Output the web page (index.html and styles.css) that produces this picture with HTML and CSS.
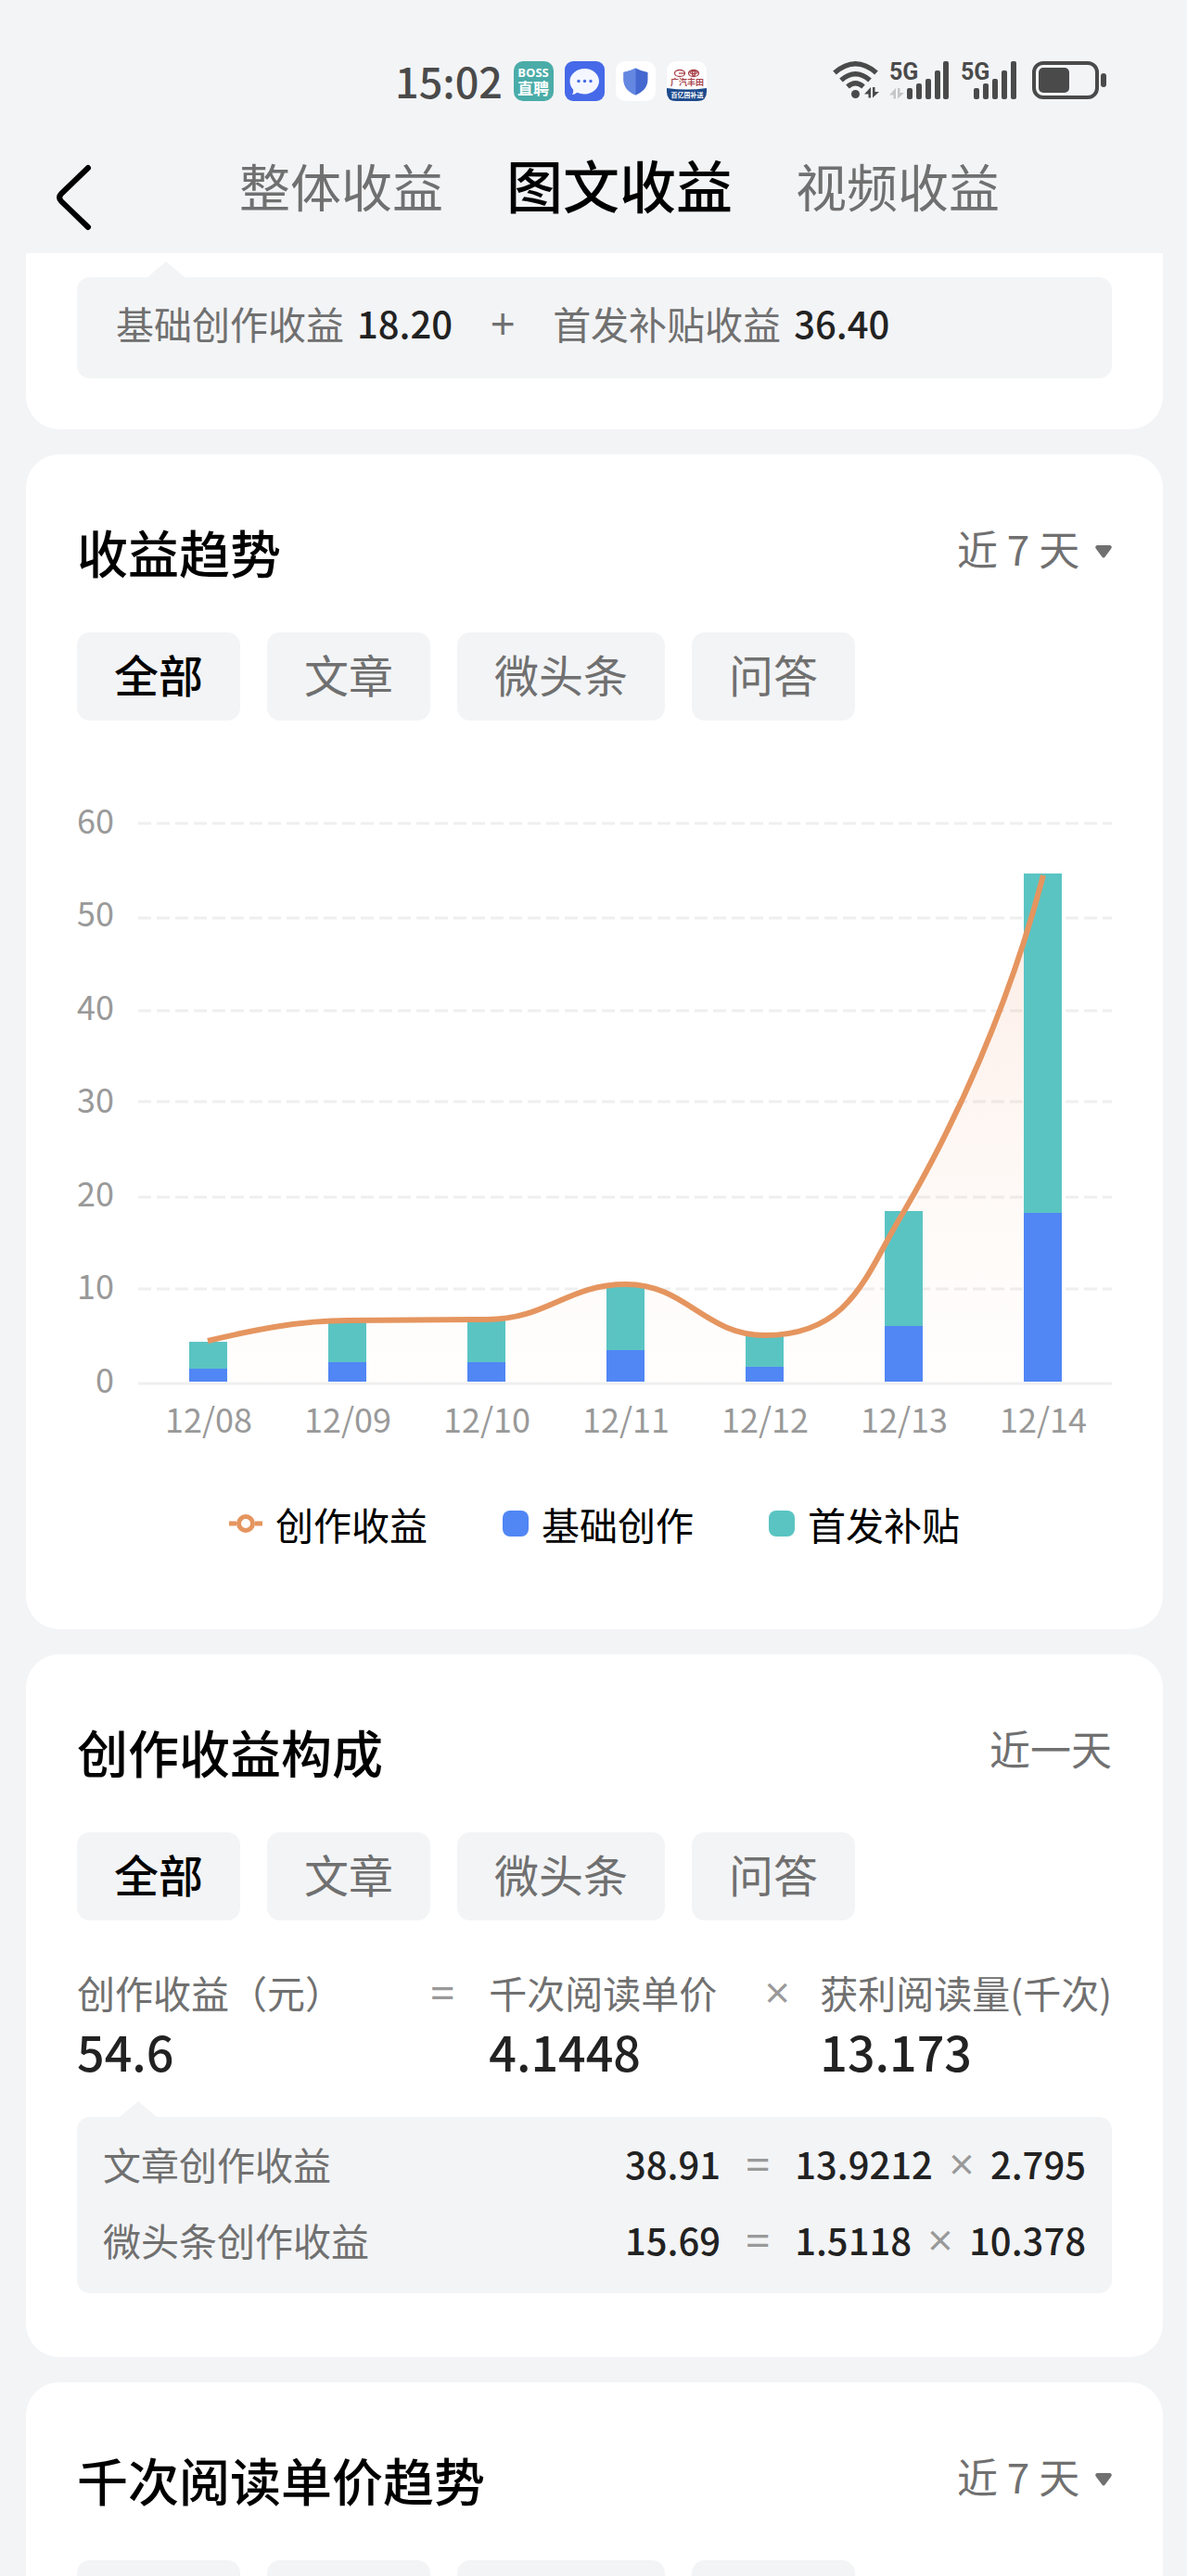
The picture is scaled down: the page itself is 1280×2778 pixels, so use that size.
FILE: index.html
```html
<!DOCTYPE html>
<html lang="zh-CN">
<head>
    <meta charset="UTF-8">
    <meta name="viewport" content="width=device-width, initial-scale=1.0">
    <title>图文收益</title>
    <link rel="stylesheet" href="styles.css">
</head>
<body>
    <div class="status-bar">
        <div class="status-left">
            <span class="time">15:02</span>
            <svg class="app-icon" viewBox="0 0 43 43">
                <rect width="43" height="43" rx="10" fill="#4aaca8"/>
                <text x="21" y="17" class="boss-en">BOSS</text>
                <text x="21" y="36" class="boss-cn">直聘</text>
            </svg>
            <svg class="app-icon" viewBox="0 0 43 43">
                <rect width="43" height="43" rx="9" fill="#4569e8"/>
                <path d="M21.500 8C30 8 37 14 37 21.500S30 35.500 21.500 35.500C18.500 35.500 16 35 13.500 33.800C12 35 10 36 8 36C9.200 34.600 9.400 32.500 9 30.600C6.800 28 5.500 25 5.500 21.500C5.500 14 13 8 21.500 8Z" fill="#f4f7ff"/>
                <g fill="#4569e8"><circle cx="15" cy="21.500" r="1.700"/><circle cx="21.500" cy="21.500" r="1.700"/><circle cx="28" cy="21.500" r="1.700"/></g>
            </svg>
            <svg class="app-icon" viewBox="0 0 43 43">
                <rect width="43" height="43" rx="10" fill="#fff"/>
                <path d="M21.500 7.500Q28 11 34.500 12V20C34.500 28 29 33.500 21.500 36.500C14 33.500 8.500 28 8.500 20V12Q15 11 21.500 7.500Z" fill="#4468cf"/>
                <path d="M21.500 7.500V36.500C14 33.500 8.500 28 8.500 20V12Q15 11 21.500 7.500Z" fill="#6488e2"/>
            </svg>
            <svg class="app-icon" viewBox="0 0 43 43">
                <rect width="43" height="43" rx="10" fill="#fff"/>
                <path d="M0 29Q21.500 32 43 29V33Q43 43 33 43H10Q0 43 0 33Z" fill="#1d4a8c"/>
                <g fill="none" stroke="#a8434a" stroke-width="1.300">
                    <ellipse cx="14" cy="13" rx="5.500" ry="3.500"/>
                    <path d="M13 13H20"/>
                    <ellipse cx="29" cy="13" rx="5.500" ry="3.500"/>
                    <ellipse cx="29" cy="12" rx="4" ry="1.500"/>
                    <ellipse cx="29" cy="13" rx="1.500" ry="3"/>
                </g>
                <text x="22" y="26" class="car-name">广汽丰田</text>
                <text x="22" y="39" class="car-sub">百亿国补送</text>
            </svg>
        </div>
        <div class="status-right">
            <svg class="wifi" viewBox="0 0 50 42">
                <g fill="none" stroke="#4a4a4a" stroke-width="5.500">
                    <path d="M2 12.500Q24.500 -7 47 12.500"/>
                    <path d="M9 20.500Q24.500 7 40 20.500"/>
                    <path d="M16 27.500Q24.500 20 33 27.500"/>
                </g>
                <circle cx="24.500" cy="35.500" r="4.500" fill="#4a4a4a"/>
                <path d="M41 28V39.500H38.500V35.500H34L41 28Z M43 28V39.500L50 33H45.500V28Z" fill="#4a4a4a"/>
            </svg>
            <svg class="signal" viewBox="0 0 66 42">
                <text x="0" y="20" class="net">5G</text>
                <path d="M7 29V40.500H4.500V36.500H0Z M9 29V40.500L16 34H11.500V29Z" fill="#c4c5c7"/>
                <g fill="#4a4a4a">
                    <rect x="19" y="29" width="6" height="12" rx="2"/>
                    <rect x="29" y="24" width="6" height="17" rx="2"/>
                    <rect x="39" y="19" width="6" height="22" rx="2"/>
                    <rect x="49" y="10" width="6" height="31" rx="2"/>
                    <rect x="58" y="0" width="6" height="41" rx="2"/>
                </g>
            </svg>
            <svg class="signal" viewBox="0 0 66 42">
                <text x="0" y="20" class="net">5G</text>
                <g fill="#4a4a4a">
                    <rect x="14" y="29" width="6" height="12" rx="2"/>
                    <rect x="24" y="24" width="6" height="17" rx="2"/>
                    <rect x="34" y="19" width="6" height="22" rx="2"/>
                    <rect x="44" y="10" width="6" height="31" rx="2"/>
                    <rect x="54" y="0" width="6" height="41" rx="2"/>
                </g>
            </svg>
            <svg class="battery" viewBox="0 0 80 42">
                <rect x="2" y="2" width="68" height="37" rx="10" fill="none" stroke="#4a4a4a" stroke-width="4"/>
                <rect x="7" y="7" width="33" height="27" rx="5" fill="#4a4a4a"/>
                <rect x="74" y="13" width="6" height="15" rx="3" fill="#4a4a4a"/>
            </svg>
        </div>
    </div>

    <header class="nav-bar">
        <button class="back" aria-label="返回">
            <svg viewBox="0 0 38 70"><path d="M35 3L6 31Q2 35 6 39L35 67" fill="none" stroke="#000" stroke-width="6" stroke-linecap="round"/></svg>
        </button>
        <nav class="tabs">
            <a href="#">整体收益</a>
            <a href="#" class="active">图文收益</a>
            <a href="#">视频收益</a>
        </nav>
    </header>

    <main class="content">
        <section class="card card-cut">
            <div class="tip tip-sum">
                <span>基础创作收益</span><b>18.20</b>
                <i class="op plus">+</i>
                <span>首发补贴收益</span><b>36.40</b>
            </div>
        </section>

        <section class="card">
            <div class="card-head">
                <h2>收益趋势</h2>
                <label class="range">
                    <select aria-label="时间范围"><option>近 7 天</option></select>
                    <svg class="caret" viewBox="0 0 18 14"><path d="M2 0H16Q19 1 17 4L11 12Q9 15 7 12L1 4Q-1 1 2 0Z" fill="#707070"/></svg>
                </label>
            </div>
            <div class="chips">
                <button class="chip active">全部</button>
                <button class="chip">文章</button>
                <button class="chip">微头条</button>
                <button class="chip">问答</button>
            </div>
            <svg class="chart" viewBox="0 0 1116 704">
                <defs>
                    <linearGradient id="area" x1="0" y1="0" x2="0" y2="1">
                        <stop offset="0" stop-color="#ea6a3a" stop-opacity="0.140"/>
                        <stop offset="1" stop-color="#f5c89a" stop-opacity="0.020"/>
                    </linearGradient>
                </defs>
                <g class="grid">
                    <path d="M66 34H1116"/>
                    <path d="M66 136H1116"/>
                    <path d="M66 236H1116"/>
                    <path d="M66 334H1116"/>
                    <path d="M66 437H1116"/>
                    <path d="M66 536H1116"/>
                </g>
                <path class="axis" d="M66 638H1116"/>
                <g class="y-labels">
                    <text x="40" y="45">60</text>
                    <text x="40" y="145">50</text>
                    <text x="40" y="246">40</text>
                    <text x="40" y="346">30</text>
                    <text x="40" y="447">20</text>
                    <text x="40" y="547">10</text>
                    <text x="40" y="648">0</text>
                </g>
                <path fill="url(#area)" d="M141 592C191 580 241 570 292 570L442 569C507 569 529 531 592 531C657 531 677 586 742 586C837 586 852 516 892 452C947 358 1005 231 1042 90V636H141Z"/>
                <g class="bar-extra">
                    <rect x="121" y="593" width="41" height="29"/>
                    <rect x="271" y="570" width="41" height="45"/>
                    <rect x="421" y="569" width="41" height="46"/>
                    <rect x="571" y="532" width="41" height="70"/>
                    <rect x="721" y="586" width="41" height="34"/>
                    <rect x="871" y="452" width="41" height="124"/>
                    <rect x="1021" y="88" width="41" height="366"/>
                </g>
                <g class="bar-base">
                    <rect x="121" y="622" width="41" height="14"/>
                    <rect x="271" y="615" width="41" height="21"/>
                    <rect x="421" y="615" width="41" height="21"/>
                    <rect x="571" y="602" width="41" height="34"/>
                    <rect x="721" y="620" width="41" height="16"/>
                    <rect x="871" y="576" width="41" height="60"/>
                    <rect x="1021" y="454" width="41" height="182"/>
                </g>
                <path class="line" d="M141 592C191 580 241 570 292 570L442 569C507 569 529 531 592 531C657 531 677 586 742 586C837 586 852 516 892 452C947 358 1005 231 1042 90"/>
                <g class="x-labels">
                    <text x="142" y="691">12/08</text>
                    <text x="292" y="691">12/09</text>
                    <text x="442" y="691">12/10</text>
                    <text x="592" y="691">12/11</text>
                    <text x="742" y="691">12/12</text>
                    <text x="892" y="691">12/13</text>
                    <text x="1042" y="691">12/14</text>
                </g>
            </svg>
            <ul class="legend">
                <li><svg class="line-mark" viewBox="0 0 36 20"><path d="M0 10H8M28 10H36" stroke="#e5955f" stroke-width="5"/><circle cx="18" cy="10" r="7.500" fill="none" stroke="#e5955f" stroke-width="5"/></svg>创作收益</li>
                <li><span class="dot dot-base"></span>基础创作</li>
                <li><span class="dot dot-extra"></span>首发补贴</li>
            </ul>
        </section>

        <section class="card">
            <div class="card-head">
                <h2>创作收益构成</h2>
                <span class="range">近一天</span>
            </div>
            <div class="chips">
                <button class="chip active">全部</button>
                <button class="chip">文章</button>
                <button class="chip">微头条</button>
                <button class="chip">问答</button>
            </div>
            <div class="formula">
                <div class="metric"><span>创作收益（元）</span><b>54.6</b></div>
                <i class="op equal">=</i>
                <div class="metric"><span>千次阅读单价</span><b>4.1448</b></div>
                <i class="op times">×</i>
                <div class="metric"><span>获利阅读量(千次)</span><b>13.173</b></div>
            </div>
            <div class="tip tip-detail">
                <span>文章创作收益</span>
                <div class="calc"><b>38.91</b><i class="op equal">=</i><b>13.9212</b><i class="op times">×</i><b>2.795</b></div>
                <span>微头条创作收益</span>
                <div class="calc"><b>15.69</b><i class="op equal">=</i><b>1.5118</b><i class="op times">×</i><b>10.378</b></div>
            </div>
        </section>

        <section class="card">
            <div class="card-head">
                <h2>千次阅读单价趋势</h2>
                <label class="range">
                    <select aria-label="时间范围"><option>近 7 天</option></select>
                    <svg class="caret" viewBox="0 0 18 14"><path d="M2 0H16Q19 1 17 4L11 12Q9 15 7 12L1 4Q-1 1 2 0Z" fill="#707070"/></svg>
                </label>
            </div>
            <div class="chips">
                <button class="chip active">全部</button>
                <button class="chip">文章</button>
                <button class="chip">微头条</button>
                <button class="chip">问答</button>
            </div>
        </section>
    </main>
</body>
</html>
```
FILE: styles.css
```css
* {
    box-sizing: border-box;
    margin: 0;
    padding: 0;
}

body {
    display: flex;
    flex-direction: column;
    height: 100vh;
    overflow: hidden;
    background: #f3f4f6;
    color: #222;
    font-family: "Noto Sans CJK SC", sans-serif;
    font-size: 41px;
}

button, select {
    font: inherit;
    color: inherit;
    background: none;
    border: none;
    cursor: pointer;
}

b {
    font-weight: 500;
}

i {
    font-style: normal;
}

svg {
    display: block;
    flex: none;
    overflow: visible;
}

/* status bar */
.status-bar {
    flex: none;
    display: flex;
    align-items: center;
    justify-content: space-between;
    padding: 56px 87px 0 426px;
}

.status-left, .status-right {
    display: flex;
    align-items: center;
    gap: 11px;
}

.status-left {
    gap: 12px;
}

.time {
    font-size: 45px;
    line-height: 62px;
    font-weight: 500;
    color: #4a4a4a;
}

.app-icon {
    width: 43px;
    height: 43px;
}

.boss-en, .boss-cn, .car-name, .car-sub {
    fill: #fff;
    text-anchor: middle;
    font-weight: 700;
}

.boss-en {
    font-family: "Open Sans", sans-serif;
    font-size: 13px;
}

.boss-cn {
    font-size: 17px;
}

.car-name {
    font-size: 9px;
    fill: #a8434a;
}

.car-sub {
    font-size: 7px;
}

.wifi {
    width: 50px;
    height: 42px;
}

.signal {
    width: 66px;
    height: 42px;
}

.net {
    font-family: Roboto, sans-serif;
    font-size: 25px;
    font-weight: 700;
    fill: #4a4a4a;
}

.battery {
    width: 80px;
    height: 42px;
}

/* nav */
.nav-bar {
    flex: none;
    display: flex;
    align-items: center;
    gap: 160px;
    height: 155px;
    padding: 34px 60px 0;
}

.back svg {
    width: 38px;
    height: 70px;
}

.tabs {
    display: flex;
    align-items: center;
    gap: 68px;
    padding-bottom: 28px;
}

.tabs a {
    font-size: 55px;
    line-height: 80px;
    color: #707070;
    text-decoration: none;
}

.tabs .active {
    font-size: 61px;
    font-weight: 500;
    color: #000;
}

/* cards */
.content {
    flex: 1;
    min-height: 0;
    overflow-y: auto;
    scrollbar-width: none;
    padding: 0 26px 0 28px;
}

.card {
    margin-bottom: 27px;
    padding: 55px;
    background: #fff;
    border-radius: 36px;
}

.card-cut {
    padding-top: 26px;
    border-radius: 0 0 36px 36px;
}

.card-head {
    display: flex;
    justify-content: space-between;
    height: 137px;
}

.card-head h2 {
    font-size: 55px;
    line-height: 98px;
    font-weight: 500;
    color: #000;
}

.range {
    display: flex;
    align-items: center;
    gap: 16px;
    height: 92px;
    font-size: 44px;
    color: #707070;
}

.range select {
    appearance: none;
}

.caret {
    width: 18px;
    height: 14px;
    margin-top: 8px;
}

.chips {
    display: flex;
    gap: 29px;
}

.chip {
    height: 95px;
    padding: 0 40px 8px;
    font-size: 48px;
    color: #707070;
    background: #f3f4f6;
    border-radius: 14px;
}

.chip.active {
    font-weight: 500;
    color: #000;
}

/* grey box with a small arrow on top */
.tip {
    position: relative;
    background: #f3f4f6;
    border-radius: 14px;
    line-height: 60px;
    color: #707070;
}

.tip::before {
    content: "";
    position: absolute;
    left: 46px;
    top: -17px;
    border: 20px solid transparent;
    border-top: none;
    border-bottom: 17px solid #f3f4f6;
}

.tip b {
    font-size: 40px;
    color: #222;
}

.tip-sum {
    display: flex;
    align-items: center;
    height: 109px;
    padding: 0 42px 12px;
}

.tip-sum::before {
    left: 76px;
}

.tip-sum b {
    margin-left: 14px;
}

.op {
    width: 28px;
    font-family: "Open Sans", sans-serif;
    font-size: 48px;
    text-align: center;
    color: #999;
}

.plus {
    margin: 0 40px;
    color: #707070;
}

.tip-detail {
    display: grid;
    grid-template-columns: 1fr auto;
    row-gap: 22px;
    margin-top: 37px;
    margin-bottom: 14px;
    padding: 20px 28px 28px;
}

.calc {
    display: flex;
}

.calc .equal {
    margin: 0 26px;
}

.calc .times {
    margin: 0 17px;
}

/* chart */
.chart {
    width: 100%;
    margin-top: 77px;
}

.grid path {
    stroke: #efefef;
    stroke-width: 3;
    stroke-dasharray: 14 6;
}

.axis {
    stroke: #efefef;
    stroke-width: 3;
}

.y-labels, .x-labels {
    font-size: 36px;
    fill: #999;
}

.y-labels {
    text-anchor: end;
}

.x-labels {
    text-anchor: middle;
}

.bar-base {
    fill: #5186f5;
}

.bar-extra {
    fill: #5ac4c3;
}

.line {
    fill: none;
    stroke: #e5955f;
    stroke-width: 6;
}

.legend {
    display: flex;
    justify-content: center;
    gap: 81px;
    padding: 55px 0 29px;
    list-style: none;
    line-height: 60px;
    color: #000;
}

.legend li {
    display: flex;
    align-items: center;
    gap: 14px;
}

.line-mark {
    width: 36px;
    height: 20px;
}

.dot {
    width: 28px;
    height: 28px;
    border-radius: 8px;
}

.dot-base {
    background: #5186f5;
}

.dot-extra {
    background: #5ac4c3;
}

/* formula */
.formula {
    display: flex;
    margin-top: 47px;
    line-height: 60px;
    color: #707070;
}

.metric:first-child {
    flex: 1;
}

.metric span, .metric b {
    display: block;
}

.metric b {
    font-size: 52px;
    line-height: 68px;
    color: #222;
}

.formula .equal {
    margin: 0 36px;
}

.formula .times {
    margin: 0 32px 0 51px;
}
```
